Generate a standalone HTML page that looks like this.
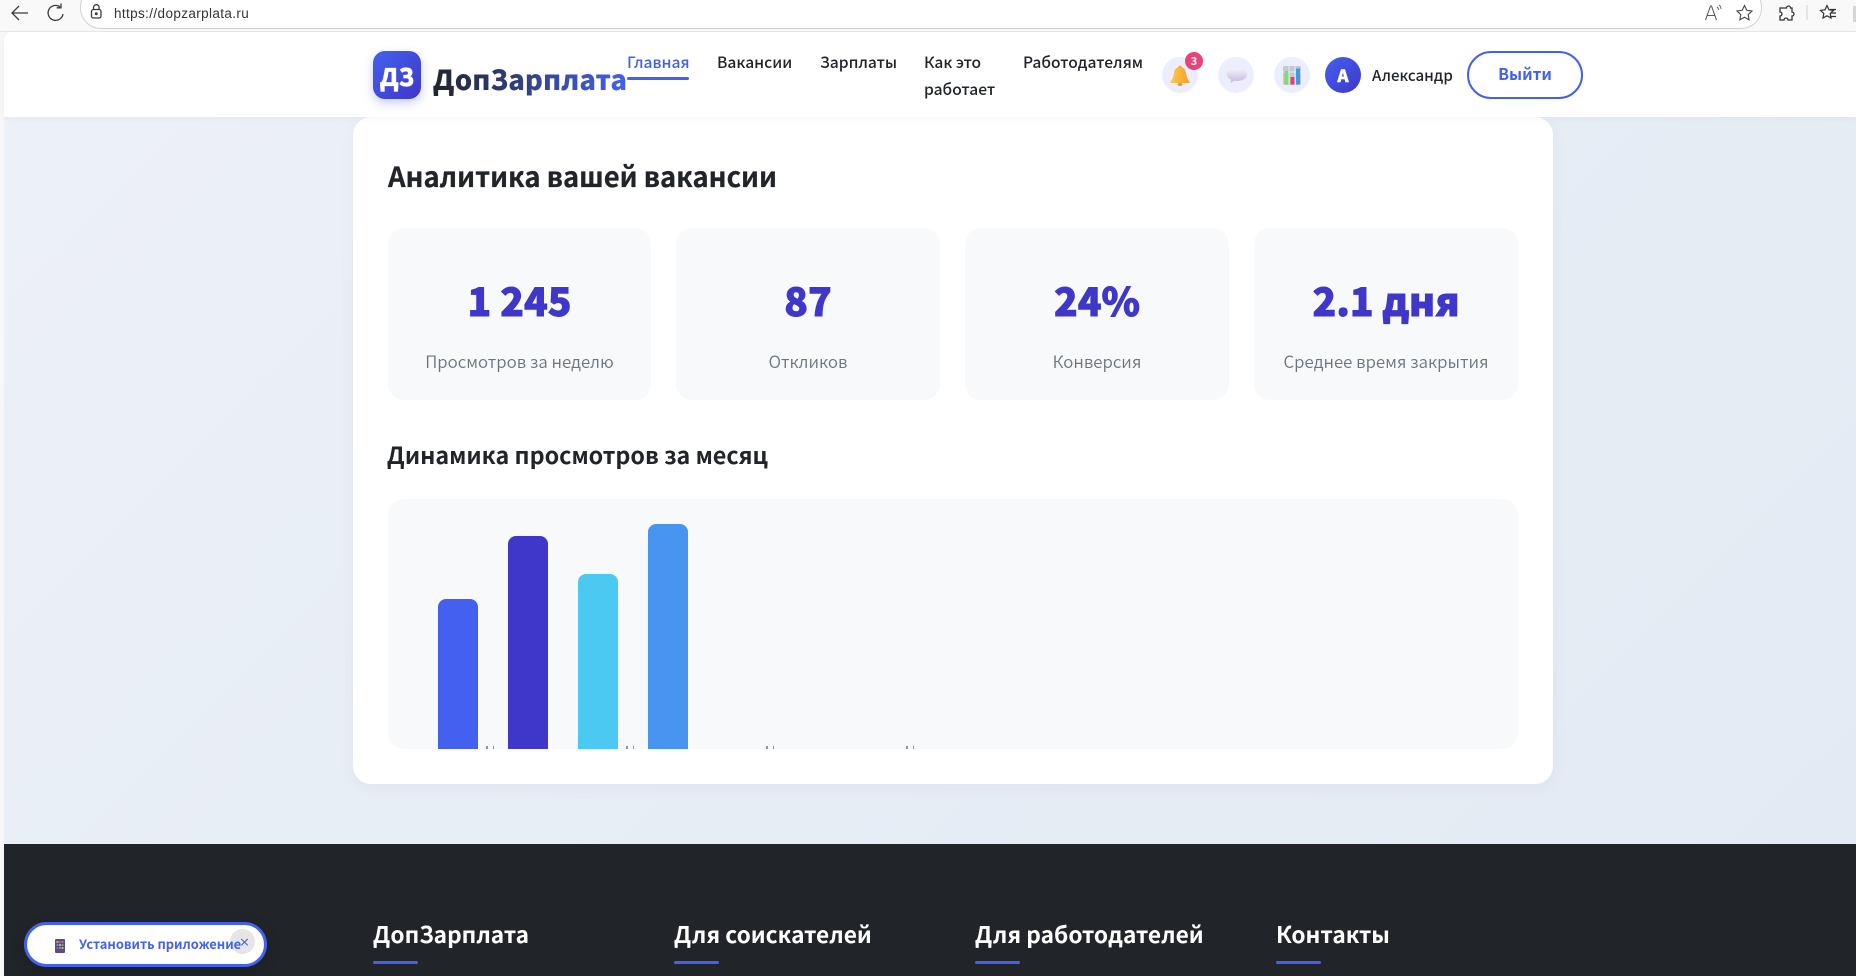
<!DOCTYPE html>
<html lang="ru">
<head>
<meta charset="utf-8">
<title>ДопЗарплата</title>
<style>
html,body{margin:0;padding:0;width:1856px;height:976px;overflow:hidden;background:#f7f7f7}
*{box-sizing:border-box}
body{position:relative;font-family:"Noto Sans CJK SC","Liberation Sans",sans-serif;color:#212529}
.a{position:absolute}
.t{position:absolute;white-space:nowrap}
.c{text-align:center}
.stat{position:absolute;top:228px;height:172px;width:264px;background:#f8f9fa;border-radius:16px}
.n{position:absolute;left:0;right:0;top:40px;line-height:64px;font-size:39px;font-weight:900;-webkit-text-stroke:.9px #3f37c9;color:#3f37c9;text-align:center;white-space:nowrap}
.l{position:absolute;left:0;right:0;top:119px;line-height:28px;font-size:16.800px;color:#6c757d;text-align:center;white-space:nowrap;font-weight:350}
.nav{font-size:15.600px;font-weight:500;line-height:27px;color:#212529}
.circ{position:absolute;top:57px;width:36px;height:36px;border-radius:50%;background:#edeefd}
.bar{position:absolute;width:40px;border-radius:8px 8px 0 0}
.tick{position:absolute;top:746px;width:1.500px;height:3px;background:#8f9399}
.fh{position:absolute;top:916px;line-height:36px;font-size:22.700px;font-weight:700;color:#fff;white-space:nowrap}
.fu{position:absolute;top:961px;width:45px;height:3px;background:#4361ee;border-radius:2px}
</style>
</head>
<body>
<!-- browser toolbar -->
<div class="a" style="left:0;top:0;width:1856px;height:32px;background:#f9f9f9;border-bottom:1px solid #e8e8e8"></div>
<div class="a" style="left:80px;top:-14px;width:1682px;height:43px;background:#fff;border:1px solid #d2d2d2;border-radius:21px"></div>
<svg class="a" style="left:0;top:0" width="130" height="30" viewBox="0 0 130 30" fill="none" stroke="#3c3c3c" stroke-width="1.300">
  <path d="M28 13H12.500M19 6l-7 7 7 7"/>
  <path d="M63 14a7.500 7.500 0 1 1-3-7.200M61 3.500v4.300h-4.300"/>
  <rect x="91.500" y="9.500" width="9.500" height="8.500" rx="2"/>
  <path d="M93.500 9.500V7.500a2.800 2.800 0 0 1 5.600 0v2"/>
  <circle cx="96.200" cy="13.700" r=".8" fill="#3c3c3c"/>
</svg>
<div class="t" style="left:114px;top:4px;line-height:20px;font-size:13.500px;letter-spacing:.38px;font-family:'Liberation Sans',sans-serif;color:#333">https://dopzarplata.ru</div>
<svg class="a" style="left:1700px;top:0" width="156" height="30" viewBox="0 0 156 30" fill="none" stroke="#5a5a5a" stroke-width="1.100">
  <path d="M5.500 20l5-14h1l5 14M7.500 15.500h7"/>
  <path d="M17 7c1 .7 1.500 1.700 1.500 3M19 5c1.500 1 2 2.500 2 4" stroke-width=".9"/>
  <path d="M44.500 5.500l2.300 4.800 5.200.7-3.800 3.600.9 5.200-4.600-2.500-4.600 2.500.9-5.200-3.800-3.600 5.200-.7z" stroke="#444"/>
  <path d="M83 8h3.500a2 2 0 0 1 4 0H92v4a2 2 0 0 1 0 4v4h-4a2 2 0 0 0-4 0h-4v-4a2 2 0 0 0 0-4V8z" stroke="#333" stroke-width="1.300"/>
  <path d="M107 5v15" stroke="#d8d8d8"/>
  <path d="M127 5.500l2 4.300 4.500.6-3.300 3.100.8 4.500-4-2.200-4 2.200.8-4.500-3.300-3.100 4.500-.6z" stroke="#333" stroke-width="1.200"/>
  <path d="M130 9.500h6M131 13h5M130 16.500h6" stroke="#333" stroke-width="1.200"/>
</svg>
<div class="a" style="left:1853px;top:6px;width:3px;height:16px;background:#d9d4cf"></div>

<!-- page background -->
<div class="a" style="left:4px;top:32px;width:1852px;height:944px;border-radius:8px 0 0 0;background:linear-gradient(135deg,#edf1f7 0%,#e6edf5 55%,#e3eaf3 100%)"></div>

<!-- card -->
<div class="a" style="left:353px;top:117px;width:1200px;height:667px;background:#fff;border-radius:18px;box-shadow:0 4px 16px rgba(60,80,120,.05)"></div>

<!-- header -->
<div class="a" style="left:4px;top:32px;width:1852px;height:85px;background:#fff;border-radius:8px 0 0 0;box-shadow:0 2px 8px rgba(0,0,0,.03)"></div>
<div class="a c" style="left:373px;top:51px;width:48px;height:48px;border-radius:12px;background:linear-gradient(135deg,#4361ee,#3f37c9);box-shadow:0 4px 10px rgba(67,97,238,.3);color:#fff;font-weight:800;font-size:24px;line-height:50px;-webkit-text-stroke:.3px #fff">ДЗ</div>
<div class="t" style="left:433px;top:56px;line-height:44px;font-size:27.500px;font-weight:900;background:linear-gradient(90deg,#212529 0%,#4361ee 100%);-webkit-background-clip:text;background-clip:text;color:transparent">ДопЗарплата</div>

<div class="t nav" style="left:627px;top:49px;color:#4361ee">Главная</div>
<div class="a" style="left:627px;top:77px;width:62px;height:3px;background:#4361ee;border-radius:2px"></div>
<div class="t nav" style="left:717px;top:49px">Вакансии</div>
<div class="t nav" style="left:820px;top:49px">Зарплаты</div>
<div class="t nav" style="left:924px;top:49px">Как это</div>
<div class="t nav" style="left:924px;top:76px">работает</div>
<div class="t nav" style="left:1023px;top:49px">Работодателям</div>

<div class="circ" style="left:1162px"></div>
<svg class="a" style="left:1168px;top:62px" width="24" height="28" viewBox="0 0 24 28">
  <defs><linearGradient id="bg" x1="0" y1="0" x2="1" y2="0"><stop offset="0" stop-color="#fdc94a"/><stop offset="1" stop-color="#f7a02a"/></linearGradient></defs>
  <circle cx="12" cy="5.500" r="1.800" fill="#f7a42a"/>
  <path d="M12 5c-4.200 0-5.700 3-6.200 7.200-.4 3-1.700 5.300-3.300 7.300-.5.8 0 1.500 1 1.500h17c1 0 1.500-.7 1-1.500-1.600-2-2.900-4.300-3.300-7.300C17.700 8 16.200 5 12 5z" fill="url(#bg)"/>
  <ellipse cx="12" cy="22.500" rx="2.500" ry="1.500" fill="#ef8f2a"/>
</svg>
<div class="a c" style="left:1185px;top:52px;width:18px;height:18px;border-radius:50%;background:#e8437b;color:#fff;font-size:11px;font-weight:700;line-height:18px">3</div>

<div class="circ" style="left:1218px"></div>
<svg class="a" style="left:1225px;top:66px" width="24" height="20" viewBox="0 0 24 20">
  <defs><linearGradient id="sg" x1="0" y1="0" x2="0" y2="1"><stop offset="0" stop-color="#f5f2fc"/><stop offset="1" stop-color="#c4bbdf"/></linearGradient></defs>
  <path d="M12 2c5.500 0 10 2.700 10 6.500S17.500 15 12 15c-1 0-2-.1-3-.3-1 1.100-2.400 1.900-4 2 .7-.9 1-1.900 1-3C3.500 12.500 2 10.700 2 8.500 2 4.700 6.500 2 12 2z" fill="url(#sg)"/>
</svg>

<div class="circ" style="left:1274px"></div>
<svg class="a" style="left:1282px;top:65px" width="20" height="21" viewBox="0 0 20 21">
  <rect x="1" y="1" width="18" height="19" rx="2" fill="#c4c6d0"/>
  <path d="M7 1v19M13 1v19M1 7h18" stroke="#eceef3" stroke-width="1"/>
  <rect x="2.500" y="6" width="4" height="13.500" fill="#7fdc6e"/>
  <rect x="8.500" y="12" width="4" height="7.500" fill="#ee3a78"/>
  <rect x="14" y="3.500" width="4" height="16" fill="#3a9be8"/>
</svg>

<div class="a c" style="left:1325px;top:57px;width:36px;height:36px;border-radius:50%;background:linear-gradient(135deg,#4361ee,#3f37c9);color:#fff;font-weight:800;font-size:17px;line-height:36px;-webkit-text-stroke:.4px #fff">А</div>
<div class="t" style="left:1372px;top:62px;line-height:27px;font-size:15.100px;font-weight:500;color:#212529">Александр</div>
<div class="a c" style="left:1467px;top:51px;width:116px;height:48px;border:2.500px solid #4361ee;border-radius:24px;color:#4361ee;font-weight:600;font-size:16px;line-height:41px">Выйти</div>

<!-- card content -->
<div class="t" style="left:388px;top:153px;line-height:44px;font-size:27.400px;font-weight:700;-webkit-text-stroke:.25px #212529;color:#212529">Аналитика вашей вакансии</div>

<div class="stat" style="left:388px;width:263px"><div class="n">1 245</div><div class="l">Просмотров за неделю</div></div>
<div class="stat" style="left:676px"><div class="n">87</div><div class="l">Откликов</div></div>
<div class="stat" style="left:965px"><div class="n">24%</div><div class="l">Конверсия</div></div>
<div class="stat" style="left:1254px"><div class="n">2.1 дня</div><div class="l">Среднее время закрытия</div></div>

<div class="t" style="left:387px;top:436px;line-height:36px;font-size:23.300px;font-weight:700;color:#212529">Динамика просмотров за месяц</div>

<div class="a" style="left:388px;top:499px;width:1130px;height:250px;background:#f8f9fa;border-radius:16px"></div>
<div class="bar" style="left:438px;top:599px;height:150px;background:#4361ee"></div>
<div class="bar" style="left:508px;top:536px;height:213px;background:#3f37c9"></div>
<div class="bar" style="left:578px;top:574px;height:175px;background:#4cc9f0"></div>
<div class="bar" style="left:648px;top:524px;height:225px;background:#4895ef"></div>
<div class="tick" style="left:486px"></div><div class="tick" style="left:492.500px"></div>
<div class="tick" style="left:626px"></div><div class="tick" style="left:632.500px"></div>
<div class="tick" style="left:766px"></div><div class="tick" style="left:772.500px"></div>
<div class="tick" style="left:906px"></div><div class="tick" style="left:912.500px"></div>

<!-- footer -->
<div class="a" style="left:4px;top:844px;width:1852px;height:132px;background:#212529"></div>
<div class="fh" style="left:373px">ДопЗарплата</div><div class="fu" style="left:373px"></div>
<div class="fh" style="left:674px">Для соискателей</div><div class="fu" style="left:674px"></div>
<div class="fh" style="left:975px">Для работодателей</div><div class="fu" style="left:975px"></div>
<div class="fh" style="left:1276px">Контакты</div><div class="fu" style="left:1276px"></div>

<!-- install pill -->
<div class="a" style="left:24px;top:922px;width:243px;height:45px;background:#fff;border:3px solid #4361ee;border-radius:23px;box-shadow:0 4px 14px rgba(0,0,0,.2)"></div>
<svg class="a" style="left:54px;top:939px" width="12" height="14" viewBox="0 0 12 14">
  <rect x="1" y="0" width="10" height="14" rx="1" fill="#5d4a8c"/>
  <rect x="2.500" y="2" width="2" height="2" fill="#e8a33d"/><rect x="5" y="2" width="2" height="2" fill="#d94a4a"/><rect x="7.500" y="2" width="2" height="2" fill="#3a9be8"/>
  <rect x="2.500" y="5" width="2" height="2" fill="#3a9be8"/><rect x="5" y="5" width="2" height="2" fill="#e8a33d"/><rect x="7.500" y="5" width="2" height="2" fill="#5cb85c"/>
  <rect x="2.500" y="8" width="2" height="2" fill="#d94a4a"/><rect x="5" y="8" width="2" height="2" fill="#3a9be8"/><rect x="7.500" y="8" width="2" height="2" fill="#e8a33d"/>
</svg>
<div class="a" style="left:230px;top:929px;width:25px;height:25px;border-radius:50%;background:#e6e6e6"></div>
<div class="t" style="left:79px;top:933px;line-height:22px;font-size:12.900px;font-weight:600;color:#4361ee">Установить приложение</div>
<div class="t" style="left:239px;top:934px;line-height:16px;font-size:11px;font-weight:700;color:#4361ee">×</div>
</body>
</html>
